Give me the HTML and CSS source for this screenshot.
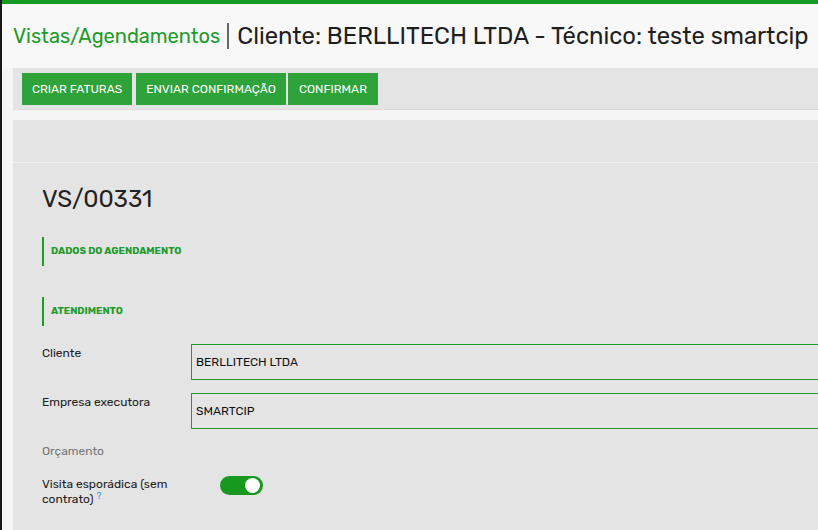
FILE: index.html
```html
<!DOCTYPE html>
<html lang="pt-BR">
<head>
    <meta charset="UTF-8">
    <meta name="viewport" content="width=device-width, initial-scale=1.0">
    <title>Vistas/Agendamentos</title>
    <link rel="stylesheet" href="styles.css">
</head>
<body>
    <div class="app">
        <div class="topbar"></div>
        <div class="header">
            <h1 class="breadcrumb">
                <span class="crumb">Vistas/Agendamentos</span>
                <span class="sep"></span>
                <span class="current">Cliente: BERLLITECH LTDA - Técnico: teste smartcip</span>
            </h1>
        </div>
        <div class="buttons">
            <button type="button" class="btn btn-first">CRIAR FATURAS</button>
            <button type="button" class="btn btn-wide">ENVIAR CONFIRMAÇÃO</button>
            <button type="button" class="btn btn-last">CONFIRMAR</button>
        </div>
        <div class="content">
            <div class="statusbar"></div>
            <div class="sheet">
                <h2 class="record">VS/00331</h2>

                <div class="section">DADOS DO AGENDAMENTO</div>
                <div class="section">ATENDIMENTO</div>

                <div class="field">
                    <label class="label">Cliente</label>
                    <div class="input">BERLLITECH LTDA</div>
                </div>
                <div class="field">
                    <label class="label">Empresa executora</label>
                    <div class="input">SMARTCIP</div>
                </div>
                <div class="field">
                    <label class="label muted">Orçamento</label>
                </div>
                <div class="field toggle-row">
                    <label class="label">Visita esporádica (sem contrato)<span class="help">?</span></label>
                    <span class="toggle"><span class="knob"></span></span>
                </div>
            </div>
        </div>
    </div>
</body>
</html>
```

FILE: styles.css
```css
html, body { margin: 0; padding: 0; height: 100%; }
body { font-family: Rubik, Roboto, "Noto Sans", sans-serif; background-color: #1b161a; color: #222; overflow: hidden; }
.app { margin-left: 2px; height: 100%; background-color: #f5f5f5; display: flex; flex-direction: column; }
.topbar { height: 4px; background-color: #139b23; flex: none; }
.header { background-color: #f8f8f8; height: 64px; padding-left: 11px; display: flex; align-items: center; flex: none; }
.breadcrumb { margin: 0; font-weight: normal; display: flex; align-items: center; white-space: nowrap; padding-bottom: 1px; }
.crumb { color: #1d9b2a; font-size: 20px; }
.sep { display: inline-block; width: 2px; height: 26px; background-color: #666; margin: 0 8px 0 7px; }
.current { color: #1e1e1e; font-size: 23.8px; }
.buttons { margin-left: 11px; background-color: #e4e4e4; height: 41px; display: flex; align-items: center; padding-left: 9px; border-bottom: 1px solid #dcdcdc; flex: none; }
.btn { background-color: #2ea33a; color: #fff; border: none; height: 32px; padding: 0; font-family: inherit; font-size: 12px; white-space: nowrap; cursor: pointer; }
.btn-first { width: 110px; margin-right: 4px; }
.btn-wide { width: 150px; margin-right: 2px; }
.btn-last { width: 90px; }
.content { margin-left: 11px; margin-top: 10px; background-color: #e4e4e4; flex: 1; }
.statusbar { height: 42px; border-bottom: 1px solid #f0f0f0; }
.sheet { padding: 21px 0 0 29px; }
.record { margin: 0 0 23px 0; font-size: 24px; font-weight: normal; color: #222; line-height: 30px; }
.section { border-left: 2px solid #1a9e28; height: 29px; line-height: 29px; padding-left: 7px; font-size: 10px; font-weight: bold; color: #1d9b2a; margin-bottom: 31px; }
.section + .section { margin-bottom: 18px; }
.field { display: flex; align-items: flex-start; margin-bottom: 13px; }
.label { width: 149px; font-size: 12px; line-height: 18px; color: #222; flex: none; }
.label.muted { color: #777; }
.input { flex: 1; height: 34px; border: 1px solid #1a9e28; border-right: none; font-size: 12px; line-height: 34px; padding-left: 4px; color: #111; }
.toggle-row { margin-top: 16px; }
.toggle-row .label { width: 170px; line-height: 15px; padding-top: 1px; }
.help { display: inline-block; color: #2f9bd6; font-size: 9px; line-height: 9px; vertical-align: top; margin-left: 3px; }
.toggle { margin-left: 8px; width: 43px; height: 19px; border-radius: 10px; background-color: #17991f; display: flex; align-items: center; justify-content: flex-end; padding-right: 3px; box-sizing: border-box; }
.knob { width: 15px; height: 15px; border-radius: 50%; background-color: #fff; }
```
